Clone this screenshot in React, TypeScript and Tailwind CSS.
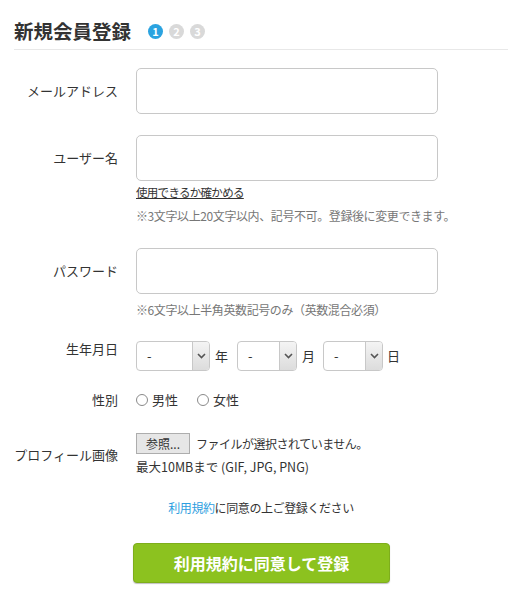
import React from "react";

function Select({ w }: { w: string }) {
  return (
    <div className={`${w} h-[30px] flex border border-[#c8c8c8] rounded-[4px] bg-white overflow-hidden`}>
      <div className="flex-1 pl-[10px] flex items-center text-[13px] text-[#333]">-</div>
      <div className="w-[17px] border-l border-[#c8c8c8] bg-gradient-to-b from-[#f4f4f4] to-[#dcdcdc] flex items-center justify-center">
        <svg width="9" height="6" viewBox="0 0 9 6">
          <path d="M1 1 L4.5 4.5 L8 1" fill="none" stroke="#555" strokeWidth="1.6" />
        </svg>
      </div>
    </div>
  );
}

function Radio({ label }: { label: string }) {
  return (
    <div className="flex items-center">
      <span className="w-[12px] h-[12px] rounded-full border border-[#8a8a8a] bg-white" />
      <span className="ml-[4px]">{label}</span>
    </div>
  );
}

export default function App() {
  return (
    <div className="w-[512px] h-[597px] bg-white text-[#333] font-['Noto_Sans_CJK_JP','Liberation_Sans',sans-serif] overflow-hidden">
      <div className="ml-[14px] mr-[4px] pt-[17px] pb-[4px] border-b border-[#e8e8e8] flex items-center">
        <h1 className="text-[19.5px] leading-[28px] font-bold text-[#333]">新規会員登録</h1>
        <div className="ml-[17px] flex items-center gap-[6px]">
          <span className="w-[15px] h-[15px] rounded-full bg-[#2ba3e0] text-white text-[11px] font-bold flex items-center justify-center leading-none">1</span>
          <span className="w-[15px] h-[15px] rounded-full bg-[#d9d9d9] text-white text-[11px] font-bold flex items-center justify-center leading-none">2</span>
          <span className="w-[15px] h-[15px] rounded-full bg-[#d9d9d9] text-white text-[11px] font-bold flex items-center justify-center leading-none">3</span>
        </div>
      </div>

      {/* email */}
      <div className="mt-[18px] flex items-center">
        <div className="w-[118px] text-right text-[13px]">メールアドレス</div>
        <div className="ml-[18px] w-[302px] h-[46px] border border-[#c8c8c8] rounded-[5px] bg-white" />
      </div>

      {/* username */}
      <div className="mt-[21px] flex">
        <div className="w-[118px] h-[46px] flex items-center justify-end text-[13px]">ユーザー名</div>
        <div className="ml-[18px] flex flex-col">
          <div className="w-[302px] h-[46px] border border-[#c8c8c8] rounded-[5px] bg-white" />
          <div className="mt-[2px] text-[11.5px] leading-[18px] underline text-[#333] tracking-[-0.7px] whitespace-nowrap">使用できるか確かめる</div>
          <div className="mt-[6px] text-[12px] leading-[18px] text-[#777] tracking-[-0.4px] whitespace-nowrap">※3文字以上20文字以内、記号不可。登録後に変更できます。</div>
        </div>
      </div>

      {/* password */}
      <div className="mt-[23px] flex">
        <div className="w-[118px] h-[46px] flex items-center justify-end text-[13px]">パスワード</div>
        <div className="ml-[18px] flex flex-col">
          <div className="w-[302px] h-[46px] border border-[#c8c8c8] rounded-[5px] bg-white" />
          <div className="mt-[7px] text-[12px] leading-[18px] text-[#777] tracking-[-0.4px] whitespace-nowrap">※6文字以上半角英数記号のみ（英数混合必須）</div>
        </div>
      </div>

      {/* birthday */}
      <div className="mt-[22px] flex items-start">
        <div className="w-[118px] text-right text-[13px] leading-[18px] mt-[-1px]">生年月日</div>
        <div className="ml-[18px] flex items-center text-[13px]">
          <Select w="w-[74px]" />
          <span className="ml-[5px]">年</span>
          <Select w="w-[60px] ml-[9px]" />
          <span className="ml-[5px]">月</span>
          <Select w="w-[60px] ml-[8px]" />
          <span className="ml-[4px]">日</span>
        </div>
      </div>

      {/* gender */}
      <div className="mt-[20px] flex items-center text-[13px] leading-[18px]">
        <div className="w-[118px] text-right">性別</div>
        <div className="ml-[18px] flex items-center gap-[19px]">
          <Radio label="男性" />
          <Radio label="女性" />
        </div>
      </div>

      {/* profile image */}
      <div className="mt-[24px] flex items-center text-[13px]">
        <div className="w-[118px] text-right">プロフィール画像</div>
        <div className="ml-[18px] flex flex-col">
          <div className="flex items-center">
            <div className="w-[54px] h-[21px] border border-[#adadad] bg-[#e6e6e6] text-[12px] flex items-center justify-center leading-none">参照...</div>
            <span className="ml-[6px] text-[12px] tracking-[-0.5px] whitespace-nowrap">ファイルが選択されていません。</span>
          </div>
          <div className="mt-[4px] text-[12.5px] leading-[18px]">最大10MBまで (GIF, JPG, PNG)</div>
        </div>
      </div>

      {/* terms */}
      <div className="mt-[23px] ml-[133px] w-[256px] text-center text-[12px] leading-[18px] tracking-[-0.4px] whitespace-nowrap">
        <span className="text-[#2d9ee0]">利用規約</span>に同意の上ご登録ください
      </div>

      <div className="mt-[26px] ml-[133px] w-[257px] h-[40px] rounded-[4px] bg-[#8cc21f] border border-[#7eae1b] shadow-[0_1px_1px_rgba(0,0,0,0.25)] flex items-center justify-center text-white font-bold text-[16px]">
        利用規約に同意して登録
      </div>
    </div>
  );
}
